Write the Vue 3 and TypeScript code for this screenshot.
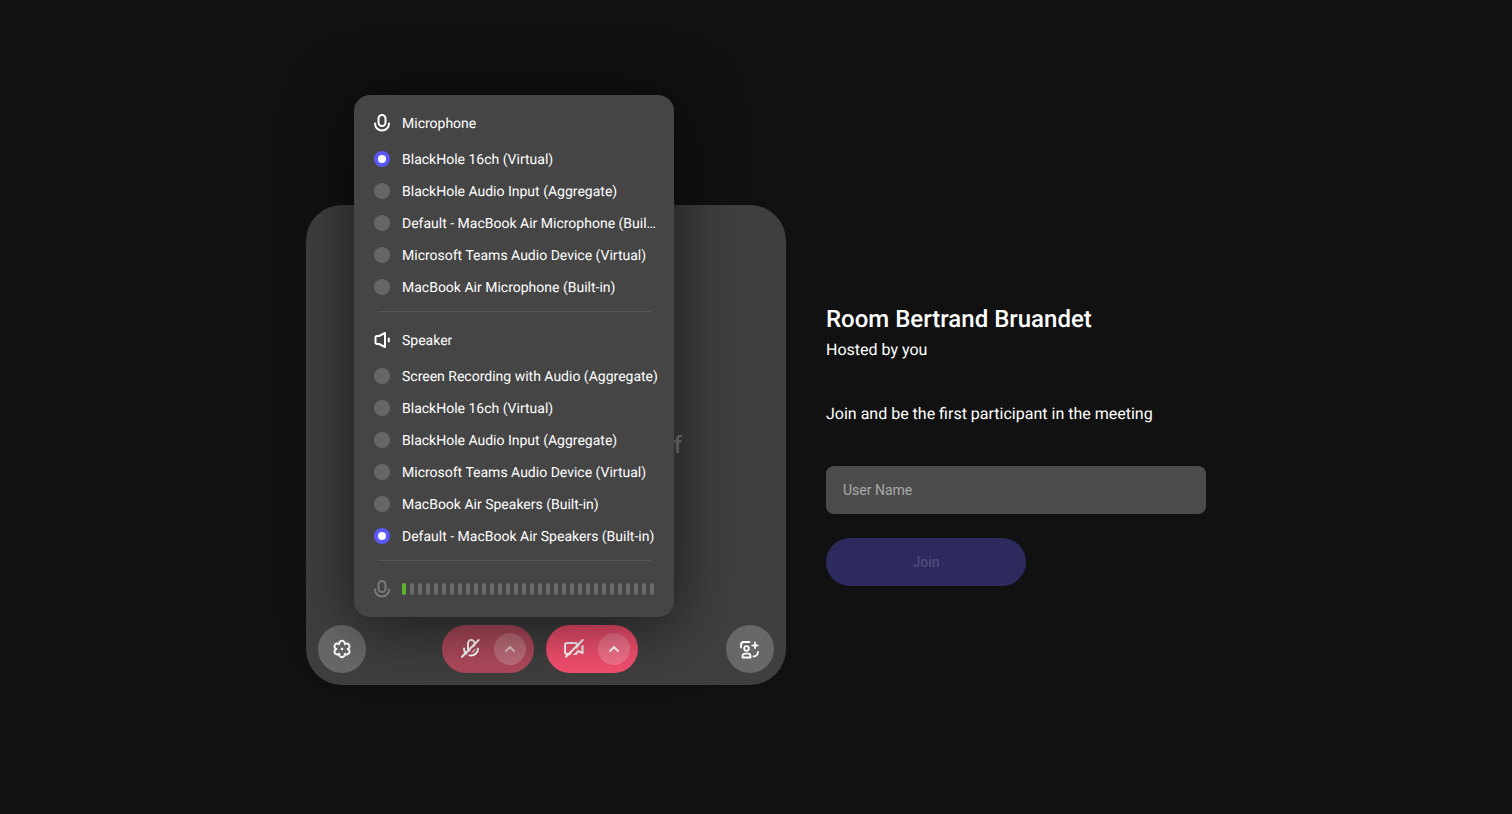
<script setup lang="ts">
interface Device {
  label: string
  selected?: boolean
}

const microphones: Device[] = [
  { label: 'BlackHole 16ch (Virtual)', selected: true },
  { label: 'BlackHole Audio Input (Aggregate)' },
  { label: 'Default - MacBook Air Microphone (Built-in)' },
  { label: 'Microsoft Teams Audio Device (Virtual)' },
  { label: 'MacBook Air Microphone (Built-in)' }
]

const speakers: Device[] = [
  { label: 'Screen Recording with Audio (Aggregate)' },
  { label: 'BlackHole 16ch (Virtual)' },
  { label: 'BlackHole Audio Input (Aggregate)' },
  { label: 'Microsoft Teams Audio Device (Virtual)' },
  { label: 'MacBook Air Speakers (Built-in)' },
  { label: 'Default - MacBook Air Speakers (Built-in)', selected: true }
]

const levelBars = 32
const activeBars = 1
</script>

<template>
  <main class="page">
    <section class="preview">
      <p class="camera-off">Your camera is turned off</p>

      <div class="device-menu">
        <div class="menu-header">
          <svg class="menu-icon" viewBox="0 0 20 20" fill="none" stroke="currentColor" stroke-width="2" stroke-linecap="round">
            <rect x="6.500" y="2" width="7" height="11" rx="3.500" />
            <path d="M3 10.500a7 7 0 0 0 14 0" />
          </svg>
          <span class="row-label">Microphone</span>
        </div>
        <div v-for="item in microphones" :key="item.label" class="menu-row">
          <span class="radio" :class="{ selected: item.selected }"></span>
          <span class="row-label">{{ item.label }}</span>
        </div>

        <div class="divider"></div>

        <div class="menu-header">
          <svg class="menu-icon" viewBox="0 0 20 20" fill="none" stroke="currentColor" stroke-width="2" stroke-linecap="round" stroke-linejoin="round">
            <path d="M3.500 7.500a1.500 1.500 0 0 1 1.500-1.500h2L13 3v14l-6-3H5a1.500 1.500 0 0 1-1.500-1.500z" />
            <path d="M16.800 8.500v3" />
          </svg>
          <span class="row-label">Speaker</span>
        </div>
        <div v-for="item in speakers" :key="item.label" class="menu-row">
          <span class="radio" :class="{ selected: item.selected }"></span>
          <span class="row-label">{{ item.label }}</span>
        </div>

        <div class="divider"></div>

        <div class="menu-row">
          <svg class="menu-icon muted" viewBox="0 0 20 20" fill="none" stroke="currentColor" stroke-width="2" stroke-linecap="round">
            <rect x="6.500" y="2" width="7" height="11" rx="3.500" />
            <path d="M3 10.500a7 7 0 0 0 14 0" />
          </svg>
          <div class="level">
            <span v-for="n in levelBars" :key="n" class="level-bar" :class="{ on: n <= activeBars }"></span>
          </div>
        </div>
      </div>

      <div class="controls">
        <button class="round-btn" type="button" aria-label="Settings">
          <svg viewBox="0 0 24 24" fill="none" stroke="currentColor" stroke-width="2" stroke-linejoin="round">
            <path d="M17.600 12A2.850 2.850 0 1 1 14.800 16.850 2.850 2.850 0 1 1 9.200 16.850 2.850 2.850 0 1 1 6.400 12 2.850 2.850 0 1 1 9.200 7.150 2.850 2.850 0 1 1 14.800 7.150 2.850 2.850 0 1 1 17.600 12z" />
            <circle cx="12" cy="12" r="1.300" fill="currentColor" stroke="none" />
          </svg>
        </button>

        <div class="media-group">
          <div class="media-pill mic">
            <svg class="pill-icon" viewBox="0 0 24 24" fill="none" stroke-width="2" stroke-linecap="round">
              <mask id="mic-slash-gap" maskUnits="userSpaceOnUse" x="0" y="0" width="24" height="24">
                <rect width="24" height="24" fill="#fff" />
                <path d="M6 21.500 22.500 5" stroke="#000" stroke-width="2" />
              </mask>
              <g stroke="currentColor" mask="url(#mic-slash-gap)">
                <rect x="10" y="3" width="6.500" height="11.500" rx="3.250" />
                <path d="M6 11.500a7 7 0 0 0 14 0" />
              </g>
              <path d="M4 19.700 20.700 3" stroke="currentColor" />
            </svg>
            <span class="caret-btn">
              <svg viewBox="0 0 16 16" fill="none" stroke="currentColor" stroke-width="2" stroke-linecap="round" stroke-linejoin="round">
                <path d="m4 10 4-4 4 4" />
              </svg>
            </span>
          </div>
          <div class="media-pill video">
            <svg class="pill-icon" viewBox="0 0 24 24" fill="none" stroke-width="2" stroke-linecap="round" stroke-linejoin="round">
              <mask id="video-slash-gap" maskUnits="userSpaceOnUse" x="0" y="0" width="24" height="24">
                <rect width="24" height="24" fill="#fff" />
                <path d="M6 21.500 22.500 5" stroke="#000" stroke-width="2" />
              </mask>
              <g stroke="currentColor" mask="url(#video-slash-gap)">
                <rect x="3" y="6" width="12" height="11" rx="2" />
                <path d="m15 10.500 5.500-2.500v8l-5.500-2.500" />
              </g>
              <path d="M4 19.700 20.700 3" stroke="currentColor" />
            </svg>
            <span class="caret-btn">
              <svg viewBox="0 0 16 16" fill="none" stroke="currentColor" stroke-width="2" stroke-linecap="round" stroke-linejoin="round">
                <path d="m4 10 4-4 4 4" />
              </svg>
            </span>
          </div>
        </div>

        <button class="round-btn effects" type="button" aria-label="Effects">
          <svg viewBox="0 0 24 24" fill="none" stroke="currentColor" stroke-width="1.800" stroke-linecap="round" stroke-linejoin="round">
            <path d="M3 10.500V8a3 3 0 0 1 3-3h5.500" />
            <path d="M20 15a4.500 4.500 0 0 1-4.500 4.500" />
            <circle cx="8.500" cy="11.500" r="2.300" />
            <path d="M4.500 20.500v-1.300a2.500 2.500 0 0 1 2.500-2.500h3a2.500 2.500 0 0 1 2.500 2.500v1.300z" />
            <path d="M17 5l.8 2.700 2.700.8-2.700.8-.8 2.700-.8-2.700-2.700-.8 2.700-.8z" fill="currentColor" stroke-width="0.800" />
          </svg>
        </button>
      </div>
    </section>

    <section class="info">
      <h1>Room Bertrand Bruandet</h1>
      <p class="host">Hosted by you</p>
      <p class="hint">Join and be the first participant in the meeting</p>
      <input class="name-input" type="text" placeholder="User Name" />
      <button class="join-btn" type="button" disabled>Join</button>
    </section>
  </main>
</template>

<style scoped>
.page {
  height: 814px;
  box-sizing: border-box;
  padding-top: 205px;
  display: flex;
  justify-content: center;
  gap: 40px;
  background: #111111;
  color: #ffffff;
  font-family: Roboto, "Liberation Sans", sans-serif;
  text-rendering: geometricPrecision;
  overflow: hidden;
}

.preview {
  position: relative;
  width: 480px;
  height: 480px;
  box-sizing: border-box;
  padding: 12px;
  display: flex;
  align-items: flex-end;
  border-radius: 36px;
  background: #3f3f3f;
}

.camera-off {
  position: absolute;
  inset: 0;
  margin: 0;
  display: flex;
  align-items: center;
  justify-content: center;
  font-size: 24px;
  font-weight: 500;
  color: #787878;
}

.device-menu {
  position: absolute;
  left: 48px;
  bottom: 68px;
  z-index: 2;
  width: 320px;
  box-sizing: border-box;
  padding: 12px 16px 12px 20px;
  border-radius: 16px;
  background: #454545;
  box-shadow: 0 8px 64px rgba(0, 0, 0, 0.6);
  font-size: 14px;
}

.menu-header {
  height: 32px;
  margin-bottom: 4px;
  display: flex;
  align-items: center;
  gap: 12px;
}

.menu-icon {
  flex: none;
  width: 20px;
  height: 20px;
  margin: 0 -2px;
  color: #ffffff;
}

.menu-icon.muted {
  color: #7a7a7a;
}

.menu-row {
  height: 32px;
  display: flex;
  align-items: center;
  gap: 12px;
}

.radio {
  flex: none;
  width: 16px;
  height: 16px;
  border-radius: 50%;
  background: #666666;
}

.radio.selected {
  box-sizing: border-box;
  border: 4px solid #5b57f5;
  background: #ffffff;
}

.row-label {
  min-width: 0;
  padding-top: 1px;
  white-space: nowrap;
  overflow: hidden;
  text-overflow: ellipsis;
}

.divider {
  height: 1px;
  margin: 8px 7px 12px 4px;
  background: #575757;
}

.level {
  display: flex;
  gap: 4px;
}

.level-bar {
  width: 4px;
  height: 12px;
  border-radius: 2px;
  background: #6b6b6b;
}

.level-bar.on {
  background: #5cb531;
}

.controls {
  width: 100%;
  display: flex;
  align-items: center;
}

.round-btn {
  width: 48px;
  height: 48px;
  padding: 12px;
  border: none;
  border-radius: 50%;
  background: #686868;
  color: #ffffff;
}

.round-btn svg {
  display: block;
  width: 24px;
  height: 24px;
}

.effects {
  margin-left: auto;
}

.media-group {
  margin-left: 76px;
  display: flex;
  gap: 12px;
}

.media-pill {
  width: 92px;
  height: 48px;
  box-sizing: border-box;
  padding: 8px 8px 8px 16px;
  display: flex;
  align-items: center;
  gap: 12px;
  border-radius: 24px;
}

.media-pill.mic {
  background: #b04a5c;
}

.media-pill.video {
  background: #f5506f;
}

.pill-icon {
  flex: none;
  width: 24px;
  height: 24px;
}

.caret-btn {
  flex: none;
  width: 32px;
  height: 32px;
  display: flex;
  align-items: center;
  justify-content: center;
  border-radius: 50%;
  background: rgba(255, 255, 255, 0.2);
}

.caret-btn svg {
  width: 16px;
  height: 16px;
}

.mic .caret-btn svg {
  opacity: 0.6;
}

.info {
  width: 380px;
  margin-top: 98px;
  display: flex;
  flex-direction: column;
  align-items: flex-start;
}

h1 {
  margin: 0;
  font-size: 24px;
  line-height: 32px;
  font-weight: 500;
}

.host {
  margin: 3px 0 0;
  font-size: 16px;
  line-height: 24px;
}

.hint {
  margin: 40px 0 0;
  font-size: 16px;
  line-height: 24px;
}

.name-input {
  width: 100%;
  height: 48px;
  box-sizing: border-box;
  margin-top: 40px;
  padding: 0 17px;
  border: none;
  border-radius: 8px;
  background: #4c4c4c;
  color: #ffffff;
  font: 14px Roboto, "Liberation Sans", sans-serif;
  outline: none;
}

.name-input::placeholder {
  color: #a8a8a8;
  opacity: 1;
}

.join-btn {
  width: 200px;
  height: 48px;
  margin-top: 24px;
  border: none;
  border-radius: 24px;
  background: #2d2a5e;
  color: #4f4b7c;
  font: 500 14px Roboto, "Liberation Sans", sans-serif;
}
</style>
